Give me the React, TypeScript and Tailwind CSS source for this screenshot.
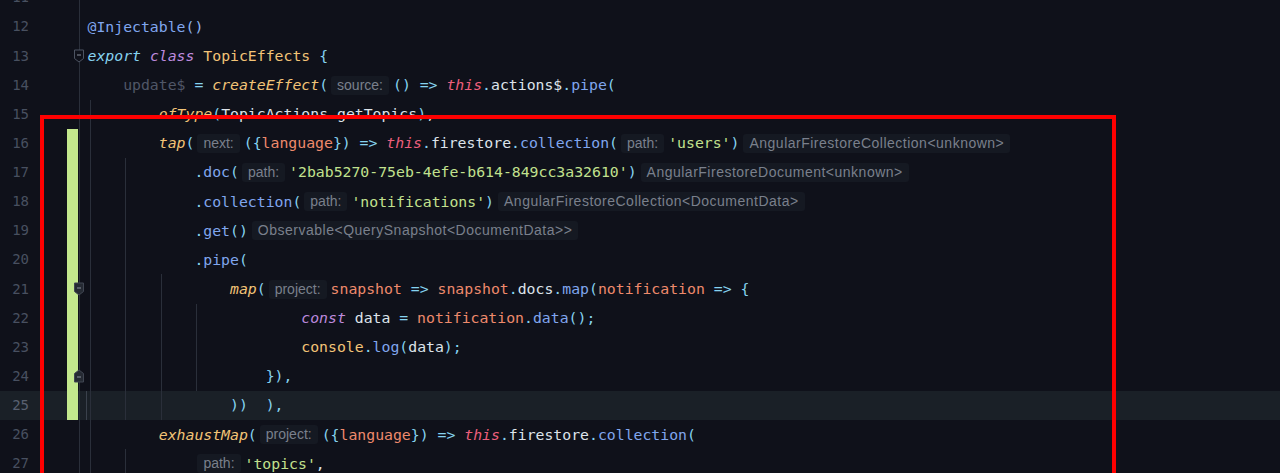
import React from "react"

type Seg = [string, string] | { h: string } | { t: string }

type Line = {
  n: number
  guides: number
  segs: Seg[]
  changed?: boolean
  fold?: "outline" | "down" | "up"
  current?: boolean
}

const P = "text-[#86d3f0]"
const FN = "text-[#80a6ee]"
const CALL = "italic text-[#f3c477]"
const YEL = "text-[#f3c477]"
const PRM = "text-[#ee8a6c]"
const THIS = "italic text-[#ec5f7c]"
const KW = "italic text-[#bd8ade]"
const STR = "text-[#c2e18e]"
const W = "text-[#dde3ea]"
const DIM = "text-[#505767]"

const lines: Line[] = [
  { n: 11, guides: 0, segs: [] },
  { n: 12, guides: 0, segs: [["@Injectable", FN], ["()", "text-[#8fb4ee]"]] },
  {
    n: 13,
    guides: 0,
    fold: "outline",
    segs: [["export", "italic text-[#86d3f0]"], [" ", W], ["class", KW], [" TopicEffects ", YEL], ["{", P]],
  },
  {
    n: 14,
    guides: 0,
    segs: [
      ["    update$", DIM], [" = ", P], ["createEffect", CALL], ["(", P], { h: "source:" },
      ["() => ", P], ["this", THIS], [".", P], ["actions$", W], [".", P], ["pipe", FN], ["(", P],
    ],
  },
  {
    n: 15,
    guides: 1,
    segs: [["    ofType", CALL], ["(", P], ["TopicActions", W], [".", P], ["getTopics", W], [")", P], [",", W]],
  },
  {
    n: 16,
    guides: 1,
    changed: true,
    segs: [
      ["    tap", CALL], ["(", P], { h: "next:" }, ["({", P], ["language", PRM], ["}) => ", P],
      ["this", THIS], [".", P], ["firestore", W], [".", P], ["collection", FN], ["(", P], { h: "path:" },
      ["'users'", STR], [")", P], { t: "AngularFirestoreCollection<unknown>" },
    ],
  },
  {
    n: 17,
    guides: 2,
    changed: true,
    segs: [
      ["    .", P], ["doc", FN], ["(", P], { h: "path:" }, ["'2bab5270-75eb-4efe-b614-849cc3a32610'", STR],
      [")", P], { t: "AngularFirestoreDocument<unknown>" },
    ],
  },
  {
    n: 18,
    guides: 2,
    changed: true,
    segs: [
      ["    .", P], ["collection", FN], ["(", P], { h: "path:" }, ["'notifications'", STR], [")", P],
      { t: "AngularFirestoreCollection<DocumentData>" },
    ],
  },
  {
    n: 19,
    guides: 2,
    changed: true,
    segs: [["    .", P], ["get", FN], ["()", P], { t: "Observable<QuerySnapshot<DocumentData>>" }],
  },
  { n: 20, guides: 2, changed: true, segs: [["    .", P], ["pipe", FN], ["(", P]] },
  {
    n: 21,
    guides: 3,
    changed: true,
    fold: "down",
    segs: [
      ["    map", CALL], ["(", P], { h: "project:" }, ["snapshot", PRM], [" => ", P], ["snapshot", PRM],
      [".", P], ["docs", W], [".", P], ["map", FN], ["(", P], ["notification", PRM], [" => {", P],
    ],
  },
  {
    n: 22,
    guides: 4,
    changed: true,
    segs: [
      ["        const", KW], [" data ", W], ["= ", P], ["notification", PRM], [".", P], ["data", FN], ["();", P],
    ],
  },
  {
    n: 23,
    guides: 4,
    changed: true,
    segs: [["        console", YEL], [".", P], ["log", FN], ["(", P], ["data", W], [");", P]],
  },
  { n: 24, guides: 4, changed: true, fold: "up", segs: [["    }),", P]] },
  { n: 25, guides: 3, changed: true, current: true, segs: [["    ))  ),", P]] },
  {
    n: 26,
    guides: 1,
    segs: [
      ["    exhaustMap", CALL], ["(", P], { h: "project:" }, ["({", P], ["language", PRM], ["}) => ", P],
      ["this", THIS], [".", P], ["firestore", W], [".", P], ["collection", FN], ["(", P],
    ],
  },
  { n: 27, guides: 2, segs: [["    ", W], { h: "path:" }, ["'topics'", STR], [",", W]] },
]

const FoldMark = ({ kind }: { kind: "outline" | "down" | "up" }) => {
  const fill = kind === "outline" ? "#0f111a" : "#252a33"
  const stroke = kind === "outline" ? "#4d5462" : "#404652"
  return (
    <svg width="12" height="15" viewBox="0 0 12 15" className="absolute left-[44px] top-1/2 -translate-y-1/2">
      {kind === "up" ? (
        <>
          <path d="M1.5 13.5h9V5L6 1.5 1.5 5z" fill={fill} stroke={stroke} />
          <path d="M4 8.5h4" stroke="#8a909b" />
        </>
      ) : (
        <>
          <path d="M1.5 1.5h9V10L6 13.5 1.5 10z" fill={fill} stroke={stroke} />
          <path d="M4 6.5h4" stroke="#8a909b" />
        </>
      )}
    </svg>
  )
}

const Hint = ({ text, type }: { text: string; type?: boolean }) => (
  <span
    className={
      type
        ? "ml-[4px] inline-block h-[19px] rounded-[3px] bg-[#151922] px-[6px] font-['Liberation_Sans',Arial,sans-serif] text-[14px] leading-[19px] tracking-[0.5px] text-[#7a808c] not-italic"
        : "ml-[3px] mr-[4px] inline-block h-[19px] rounded-[3px] bg-[#151922] px-[6px] font-['Liberation_Sans',Arial,sans-serif] text-[14px] leading-[19px] text-[#7a808c] not-italic"
    }
  >
    {text}
  </span>
)

export default function App() {
  return (
    <div className="relative h-[473px] w-[1280px] overflow-hidden bg-[#0f111a]">
      <div className="-mt-[16.8px] flex flex-col font-['DejaVu_Sans_Mono',monospace] text-[14.8px]">
        {lines.map((line) => (
          <div
            key={line.n}
            className={`flex h-[29.13px] items-center ${line.current ? "bg-[#1a2027]" : ""}`}
          >
            <div
              className={`w-[29px] shrink-0 text-right text-[14px] ${line.current ? "text-[#596070]" : "text-[#485060]"}`}
            >
              {line.n}
            </div>
            <div className="relative flex w-[58.5px] shrink-0 self-stretch">
              <div className="w-[38px]" />
              <div className={`w-[11px] ${line.changed ? "bg-[#c3e88d]" : ""}`} />
              <div className="w-px" />
              <div className="w-px bg-[#2a2f3a]" />
              <div className="flex flex-1 justify-end pr-[1px]">
                {line.current && <div className="w-px bg-[#3a414c]" />}
              </div>
              {line.fold && <FoldMark kind={line.fold} />}
            </div>
            {Array.from({ length: line.guides }).map((_, i) => (
              <div key={i} className="w-[4ch] shrink-0 self-stretch pl-[2px]">
                <div className="h-full w-px bg-[#2a2f3a]" />
              </div>
            ))}
            <div className="flex items-center whitespace-pre">
              {line.segs.map((s, i) =>
                Array.isArray(s) ? (
                  <span key={i} className={s[1]}>
                    {s[0]}
                  </span>
                ) : "h" in s ? (
                  <Hint key={i} text={s.h} />
                ) : (
                  <Hint key={i} text={s.t} type />
                )
              )}
            </div>
          </div>
        ))}
      </div>
      <div className="pointer-events-none absolute left-[40px] top-[115px] h-[420px] w-[1076px] border-4 border-[#fe0000]" />
    </div>
  )
}
